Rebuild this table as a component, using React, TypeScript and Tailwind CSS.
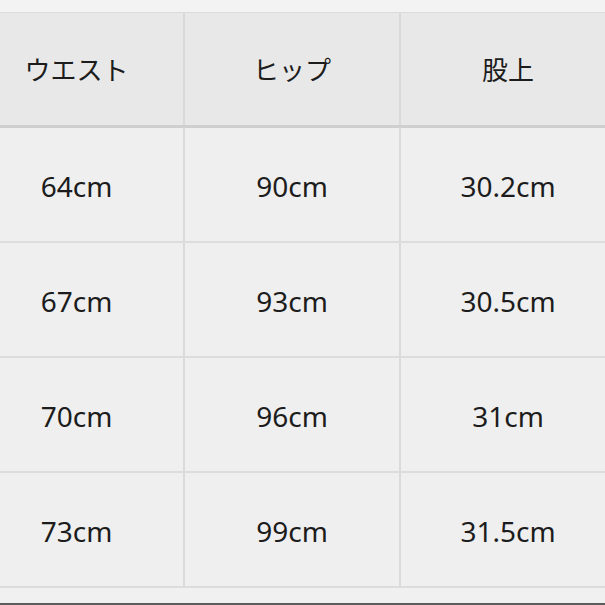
import React from "react";

const header = ["ウエスト", "ヒップ", "股上"];
const rows = [
  ["64cm", "90cm", "30.2cm"],
  ["67cm", "93cm", "30.5cm"],
  ["70cm", "96cm", "31cm"],
  ["73cm", "99cm", "31.5cm"],
];

const colCls = [
  "w-[215px] shrink-0 border-r-2 border-[#dadada]",
  "w-[216px] shrink-0 border-r-2 border-[#dadada]",
  "w-[214px] shrink-0",
];

export default function App() {
  return (
    <div
      className="w-[605px] h-[605px] overflow-hidden bg-[#efefef] flex flex-col text-[#1c1c1c]"
      style={{ fontFamily: '"Noto Sans", "Noto Sans CJK JP", sans-serif' }}
    >
      <div className="h-[13px] shrink-0 bg-[#f3f3f3] border-b border-[#dcdcdc]" />
      <div className="ml-[-30px] flex flex-col">
        <div className="flex h-[115px] bg-[#e8e8e8] border-b-[3px] border-[#cfcfcf]">
          {header.map((h, i) => (
            <div key={i} className={`${colCls[i]} flex items-center justify-center pt-[3px] text-[26px]`}>
              {h}
            </div>
          ))}
        </div>
        {rows.map((r, ri) => (
          <div key={ri} className="flex h-[115px] bg-[#efefef] border-b-2 border-[#dcdcdc]">
            {r.map((c, i) => (
              <div key={i} className={`${colCls[i]} flex items-center justify-center pt-[2px] text-[28px]`}>
                {c}
              </div>
            ))}
          </div>
        ))}
      </div>
      <div className="flex-1 bg-[#f0f0f0]" />
      <div className="h-[2px] shrink-0 bg-[#5c5c5c]" />
    </div>
  );
}
